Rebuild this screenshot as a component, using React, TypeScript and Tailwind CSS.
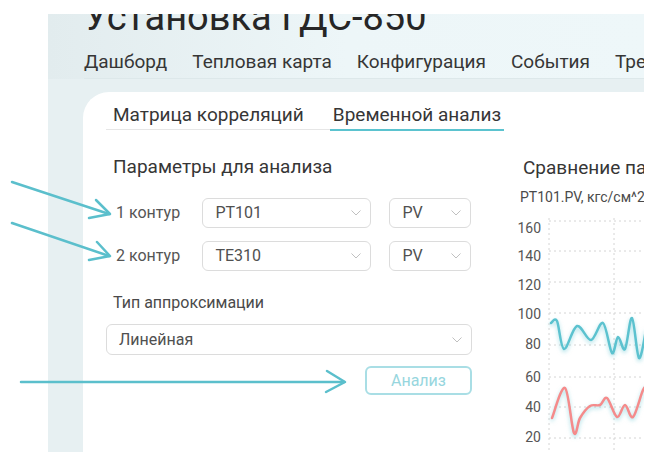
import type { ReactNode } from "react";

const font = { fontFamily: "Roboto, 'Noto Sans', sans-serif" };

// smooth line through points (catmull-rom -> cubic bezier)
function smooth(pts: [number, number][]) {
  let d = `M${pts[0][0]},${pts[0][1]}`;
  for (let i = 0; i < pts.length - 1; i++) {
    const p0 = pts[i - 1] || pts[i];
    const p1 = pts[i];
    const p2 = pts[i + 1];
    const p3 = pts[i + 2] || p2;
    const c1x = p1[0] + (p2[0] - p0[0]) / 6;
    const c1y = p1[1] + (p2[1] - p0[1]) / 6;
    const c2x = p2[0] - (p3[0] - p1[0]) / 6;
    const c2y = p2[1] - (p3[1] - p1[1]) / 6;
    d += ` C${c1x},${c1y} ${c2x},${c2y} ${p2[0]},${p2[1]}`;
  }
  return d;
}

// chart svg sits at x 518, y 218 of the page
const pv: [number, number][] = [
  [551, 323], [557, 321], [564, 349], [577, 326], [591, 340], [603, 323], [612, 353],
  [618, 337], [625, 349], [632, 318], [639, 358], [646, 330],
].map(([x, y]) => [x - 518, y - 218]);

const te: [number, number][] = [
  [552, 418], [565, 388], [574, 433], [580, 418], [590, 406], [600, 405], [607, 398],
  [617, 417], [625, 405], [633, 417], [643, 390], [648, 385],
].map(([x, y]) => [x - 518, y - 218]);

const ticks = [
  { label: "160", y: 10 },
  { label: "140", y: 38 },
  { label: "120", y: 67 },
  { label: "100", y: 96 },
  { label: "80", y: 126 },
  { label: "60", y: 159 },
  { label: "40", y: 189 },
  { label: "20", y: 219 },
];
const gridY = [3, 33, 64, 95, 127, 159, 189, 220];

function Chevron() {
  return (
    <svg width="12" height="8" viewBox="0 0 12 8" className="shrink-0">
      <polyline points="1.5,1.5 6,6 10.5,1.5" fill="none" stroke="#c0c0c0" strokeWidth="1" />
    </svg>
  );
}

function Select({ value, className }: { value: string; className: string }) {
  return (
    <div className={`flex items-center justify-between border border-[#dcdcdc] rounded-[6px] bg-white pl-3 pr-2 text-[16px] leading-[20px] text-[#505050] ${className}`}>
      <span>{value}</span>
      <Chevron />
    </div>
  );
}

function Row({ label, tag }: { label: string; tag: string }) {
  return (
    <div className="flex items-center h-[30px]">
      <div className="w-[97px] pl-[10px] text-[16px] leading-[20px] text-[#555]">{label}</div>
      <Select value={tag} className="w-[170px] h-[30px]" />
      <Select value="PV" className="ml-[18px] w-[82px] h-[30px]" />
    </div>
  );
}

function Tab({ children, active }: { children: ReactNode; active?: boolean }) {
  return (
    <div className={`px-[3px] pb-[2px] text-[19px] leading-[24px] text-[#363636] border-b-2 -mb-[2px] ${active ? "border-[#5bc3cf]" : "border-transparent"}`}>
      {children}
    </div>
  );
}

export default function App() {
  return (
    <div className="relative w-[646px] h-[452px] bg-white overflow-hidden" style={font}>
      <div className="pt-[14px] pl-[48px]">
        <div className="w-[596px] h-[438px] overflow-hidden bg-[#e7f0f2] flex flex-col">
          <div className="bg-gradient-to-r from-[#e2ecee] via-[#edf6f8] to-[#eef7f9] pl-[36px]">
            <div className="-mt-[20px] text-[38px] leading-[46px] text-[#262626] whitespace-nowrap">Установка ГДС-850</div>
            <div className="mt-[10px] flex gap-[25px] text-[19px] leading-[24px] text-[#363636] whitespace-nowrap pb-[4px] border-b border-[#dde8ea]">
              <span>Дашборд</span>
              <span>Тепловая карта</span>
              <span>Конфигурация</span>
              <span>События</span>
              <span>Тренды</span>
            </div>
          </div>

          <div className="mt-[13px] ml-[35px] flex-1 bg-white rounded-tl-[26px] flex">
            <div className="w-[388px] shrink-0 pl-[23px] pt-[11px]">
              <div className="flex gap-[23px] border-b border-[#e6e6e6] pl-[4px] w-[395px] whitespace-nowrap">
                <Tab>Матрица корреляций</Tab>
                <Tab active>Временной анализ</Tab>
              </div>

              <div className="mt-[25px] pl-[7px] text-[19px] leading-[24px] text-[#363636]">Параметры для анализа</div>

              <div className="mt-[19px] flex flex-col gap-[13px]">
                <Row label="1 контур" tag="PT101" />
                <Row label="2 контур" tag="TE310" />
              </div>

              <div className="mt-[22px] pl-[7px] text-[16px] leading-[20px] text-[#4a4a4a]">Тип аппроксимации</div>
              <Select value="Линейная" className="mt-[11px] w-[366px] h-[31px]" />

              <div className="mt-[11px] flex justify-end w-[366px]">
                <div className="w-[107px] h-[29px] flex items-center justify-center border-2 border-[#a9dee5] rounded-[6px] text-[16px] leading-[20px] text-[#97d6de]">
                  Анализ
                </div>
              </div>
            </div>

            <div className="pl-[49px] pt-[64px] whitespace-nowrap">
              <div className="pl-[3px] text-[19px] leading-[24px] text-[#363636]">Сравнение параметров</div>
              <div className="mt-[8px] text-[14px] leading-[18px] text-[#4a4a4a]">PT101.PV, кгс/см^2</div>
              <svg width="140" height="234" className="-ml-[2px] mt-[12px] block overflow-visible">
                {gridY.map(y => (
                  <line key={y} x1="31" x2="140" y1={y} y2={y} stroke="#d4d4d4" strokeDasharray="2 3" />
                ))}
                <line x1="31" x2="31" y1="0" y2="234" stroke="#d4d4d4" strokeDasharray="2 3" />
                <line x1="96" x2="96" y1="0" y2="234" stroke="#d4d4d4" strokeDasharray="2 3" />
                {ticks.map(t => (
                  <text key={t.label} x="23" y={t.y + 5} textAnchor="end" fontSize="14" fill="#555">
                    {t.label}
                  </text>
                ))}
                <g className="drop-shadow-[0_2px_2px_rgba(91,195,207,0.55)]">
                  <path d={smooth(pv)} fill="none" stroke="#5cc2cf" strokeWidth="2.5" strokeLinecap="round" />
                  <path d={smooth(te)} fill="none" stroke="#f58b8b" strokeWidth="2.5" strokeLinecap="round" />
                </g>
              </svg>
            </div>
          </div>
        </div>
      </div>

      {/* annotation arrows */}
      <svg className="absolute inset-0 pointer-events-none" width="646" height="452">
        <g stroke="#5bbfcc" strokeWidth="2.5" fill="none" strokeLinecap="round" strokeLinejoin="round">
          <line x1="12" y1="182" x2="109" y2="214" />
          <polyline points="96,200 110,214 89,218" />
          <line x1="12" y1="223" x2="109" y2="256" />
          <polyline points="97,242 110,256 89,260" />
          <line x1="21" y1="382" x2="344" y2="382" />
          <polyline points="327,371 345,382 326,392" />
        </g>
      </svg>
    </div>
  );
}
